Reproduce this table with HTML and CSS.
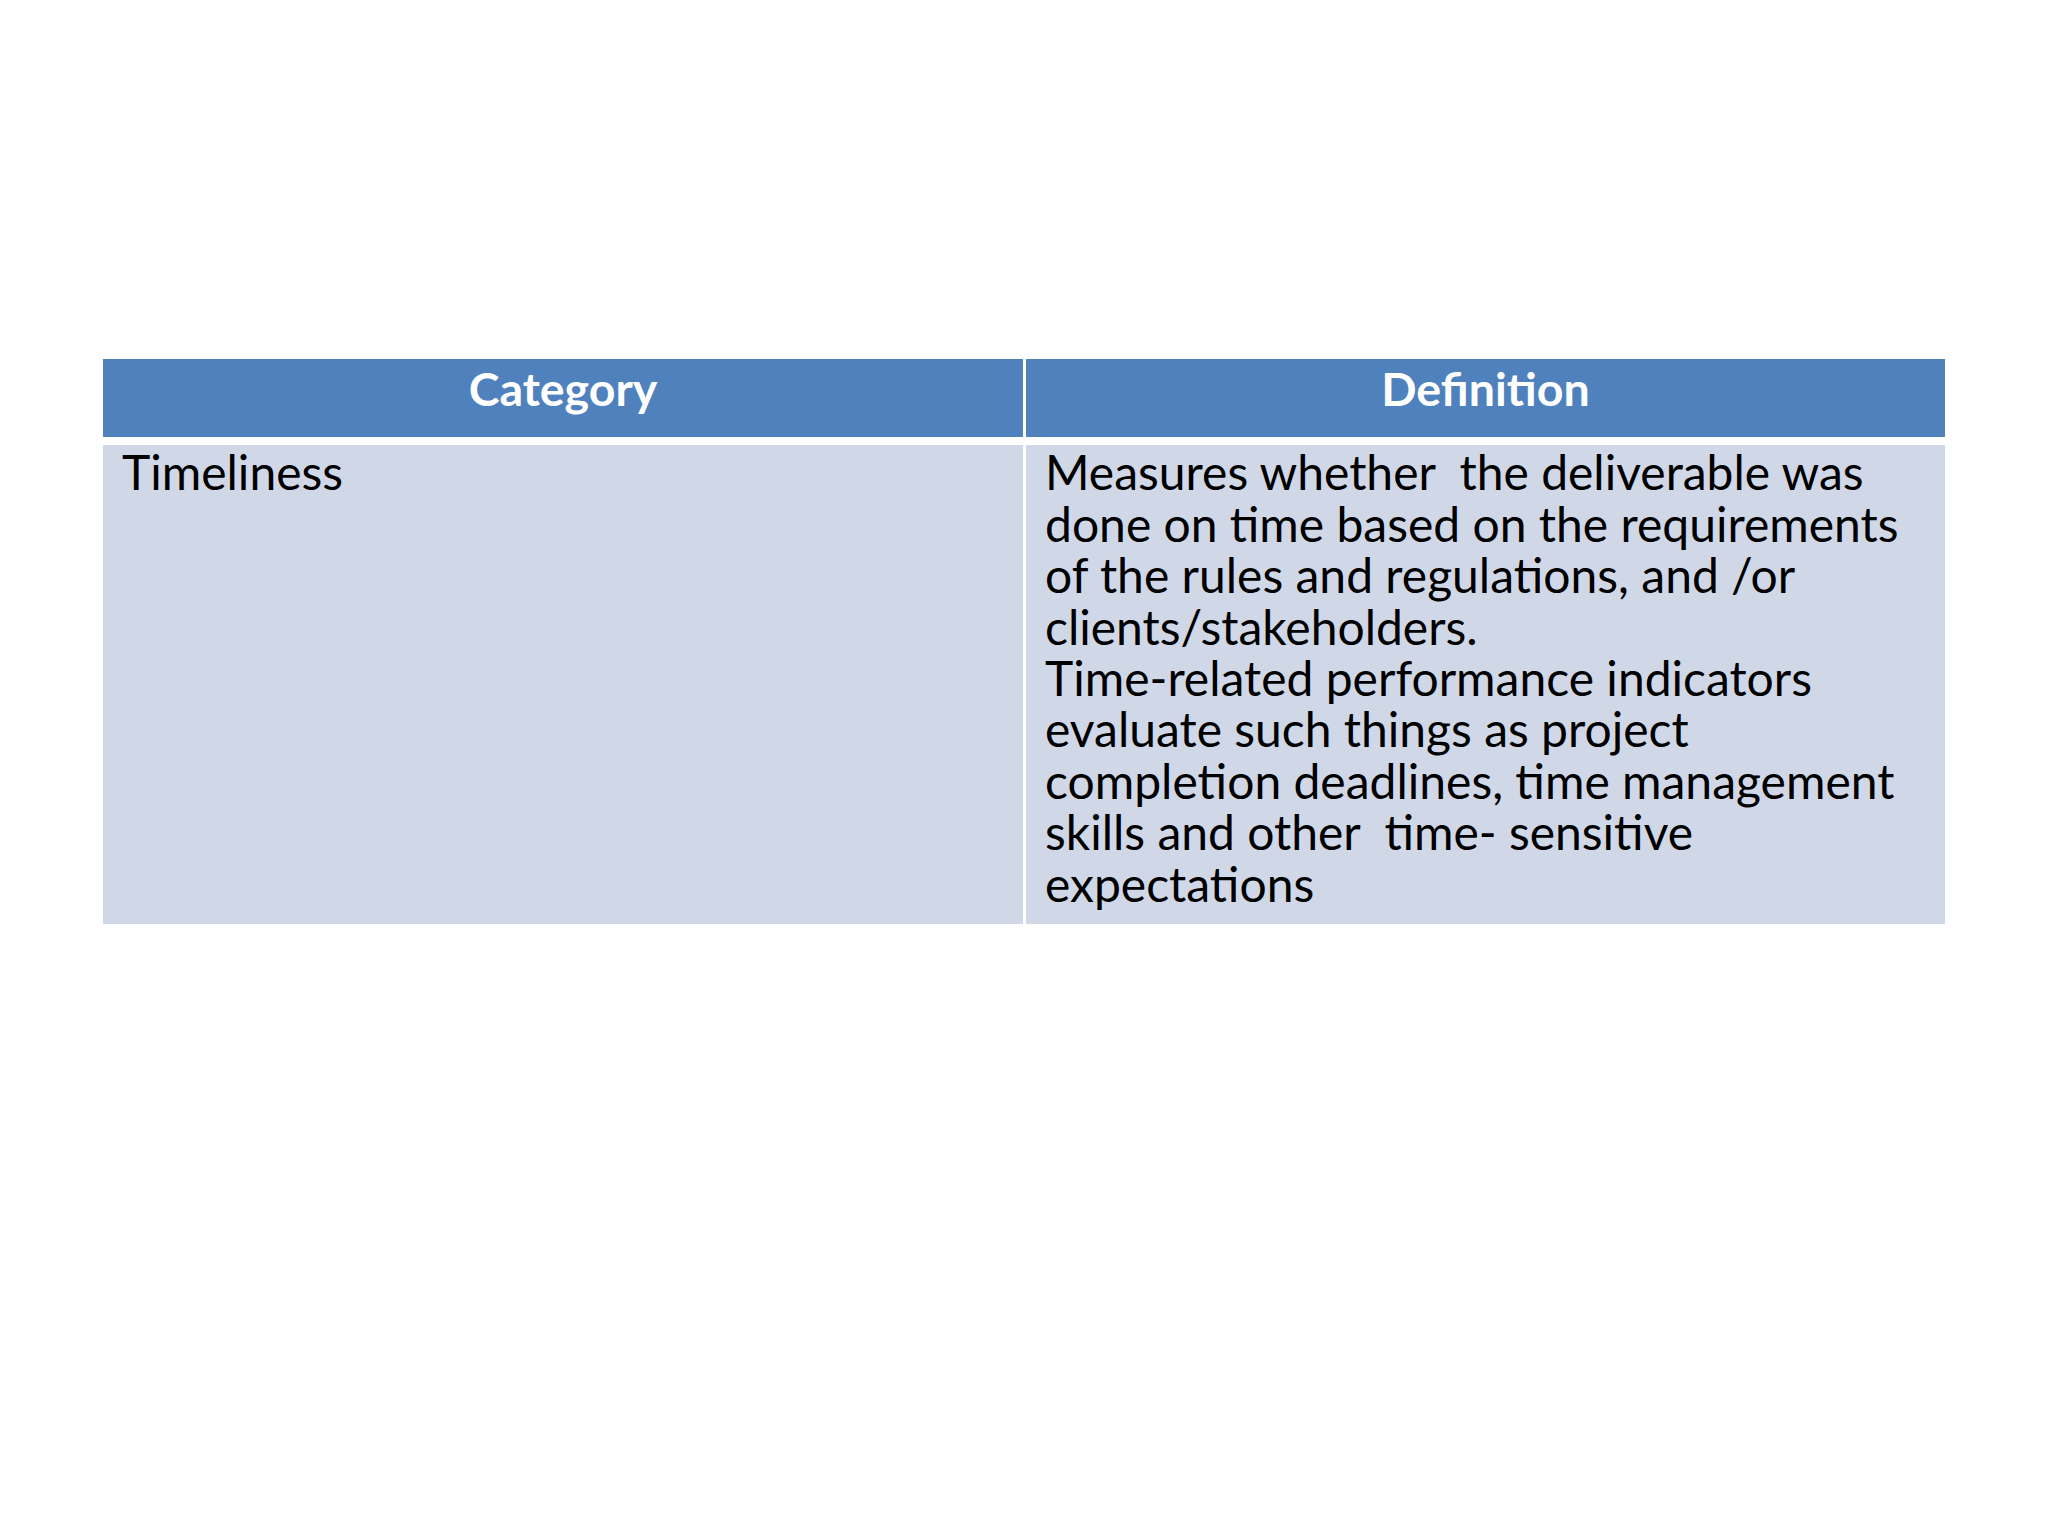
FILE: index.html
```html
<!DOCTYPE html>
<html lang="en">
<head>
<meta charset="utf-8">
<title>Timeliness</title>
<link rel="stylesheet" href="styles.css">
</head>
<body>
<div class="slide">
  <div class="table">
    <div class="cell head">Category</div>
    <div class="cell head">Definition</div>
    <div class="cell body">Timeliness</div>
    <div class="cell body">Measures whether&nbsp; the deliverable was<br>done on time based on the requirements<br>of the rules and regulations, and /or<br>clients/stakeholders.<br>Time-related performance indicators<br>evaluate such things as project<br>completion deadlines, time management<br>skills and other&nbsp; time- sensitive<br>expectations</div>
  </div>
</div>
</body>
</html>
```

FILE: styles.css
```css
html, body {
  margin: 0;
  padding: 0;
  background: #ffffff;
}
.slide {
  width: 2048px;
  height: 1536px;
  padding: 359px 0 0 103px;
  box-sizing: border-box;
}
.table {
  display: grid;
  grid-template-columns: 920px 919px;
  grid-template-rows: 78px 479px;
  column-gap: 3px;
  row-gap: 8px;
  width: 1842px;
}
.cell {
  font-family: Lato, "Open Sans", sans-serif;
  color: #000000;
  box-sizing: border-box;
}
.head {
  background: #4f81bd;
  color: #ffffff;
  font-weight: 700;
  font-size: 46.5px;
  line-height: 49px;
  text-align: center;
  padding-top: 5px;
}
.body {
  background: #d0d8e8;
  font-size: 48px;
  line-height: 51.4px;
  padding: 1.4px 18px 0 19px;
  white-space: nowrap;
}
```
